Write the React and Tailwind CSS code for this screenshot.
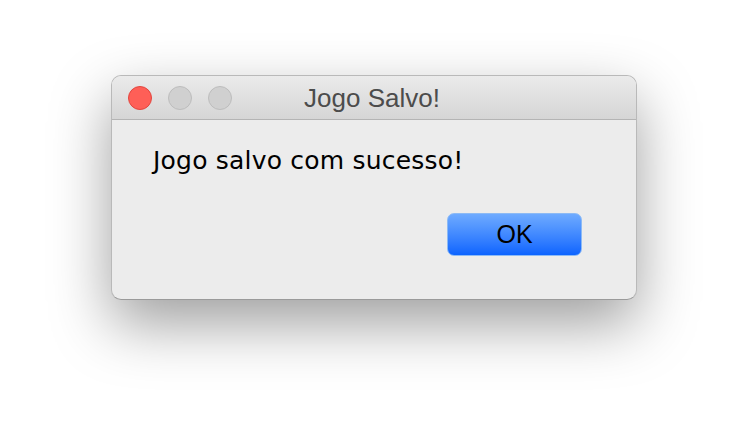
import React from "react";

const TrafficLight = ({ color }) => {
  if (color === "red") {
    return (
      <span className="block w-[24px] h-[24px] rounded-full bg-[#fe5f57] border border-[#e2463f]"></span>
    );
  }
  return (
    <span className="block w-[24px] h-[24px] rounded-full bg-[#d0d0d0] border border-[#bdbdbd]"></span>
  );
};

const App = () => {
  return (
    <div className="w-[748px] h-[448px] bg-white flex justify-center pt-[75px] font-['Helvetica_Neue','Liberation_Sans',Arial,sans-serif]">
      <div className="w-[526px] h-[225px] flex flex-col rounded-[10px] bg-[#ececec] border border-[#b9b9b9] border-b-[#9a9a9a] overflow-hidden shadow-[0_24px_60px_rgba(0,0,0,0.38)]">
        <div className="relative h-[44px] shrink-0 flex items-center bg-gradient-to-b from-[#ebebeb] to-[#d5d5d5] border-b border-[#b4b4b4]">
          <div className="flex items-center gap-[16px] pl-[16px]">
            <TrafficLight color="red" />
            <TrafficLight />
            <TrafficLight />
          </div>
          <div className="absolute inset-0 flex items-center justify-center pr-[4px]">
            <span className="text-[26px] text-[#4c4c4c] leading-none">Jogo Salvo!</span>
          </div>
        </div>

        <div className="flex-1 flex flex-col px-[41px] pt-[28px]">
          <p className="text-[25px] text-black leading-none tracking-[0.2px] font-['DejaVu_Sans',sans-serif]">
            Jogo salvo com sucesso!
          </p>
          <div className="flex justify-end mt-[40px] pr-[13px]">
            <button className="w-[135px] h-[43px] rounded-[7px] border border-[#8cbaf5] bg-gradient-to-b from-[#6eaaff] to-[#0a63ff] text-black text-[25px] leading-none flex items-center justify-center">
              OK
            </button>
          </div>
        </div>
      </div>
    </div>
  );
};

export default App;
